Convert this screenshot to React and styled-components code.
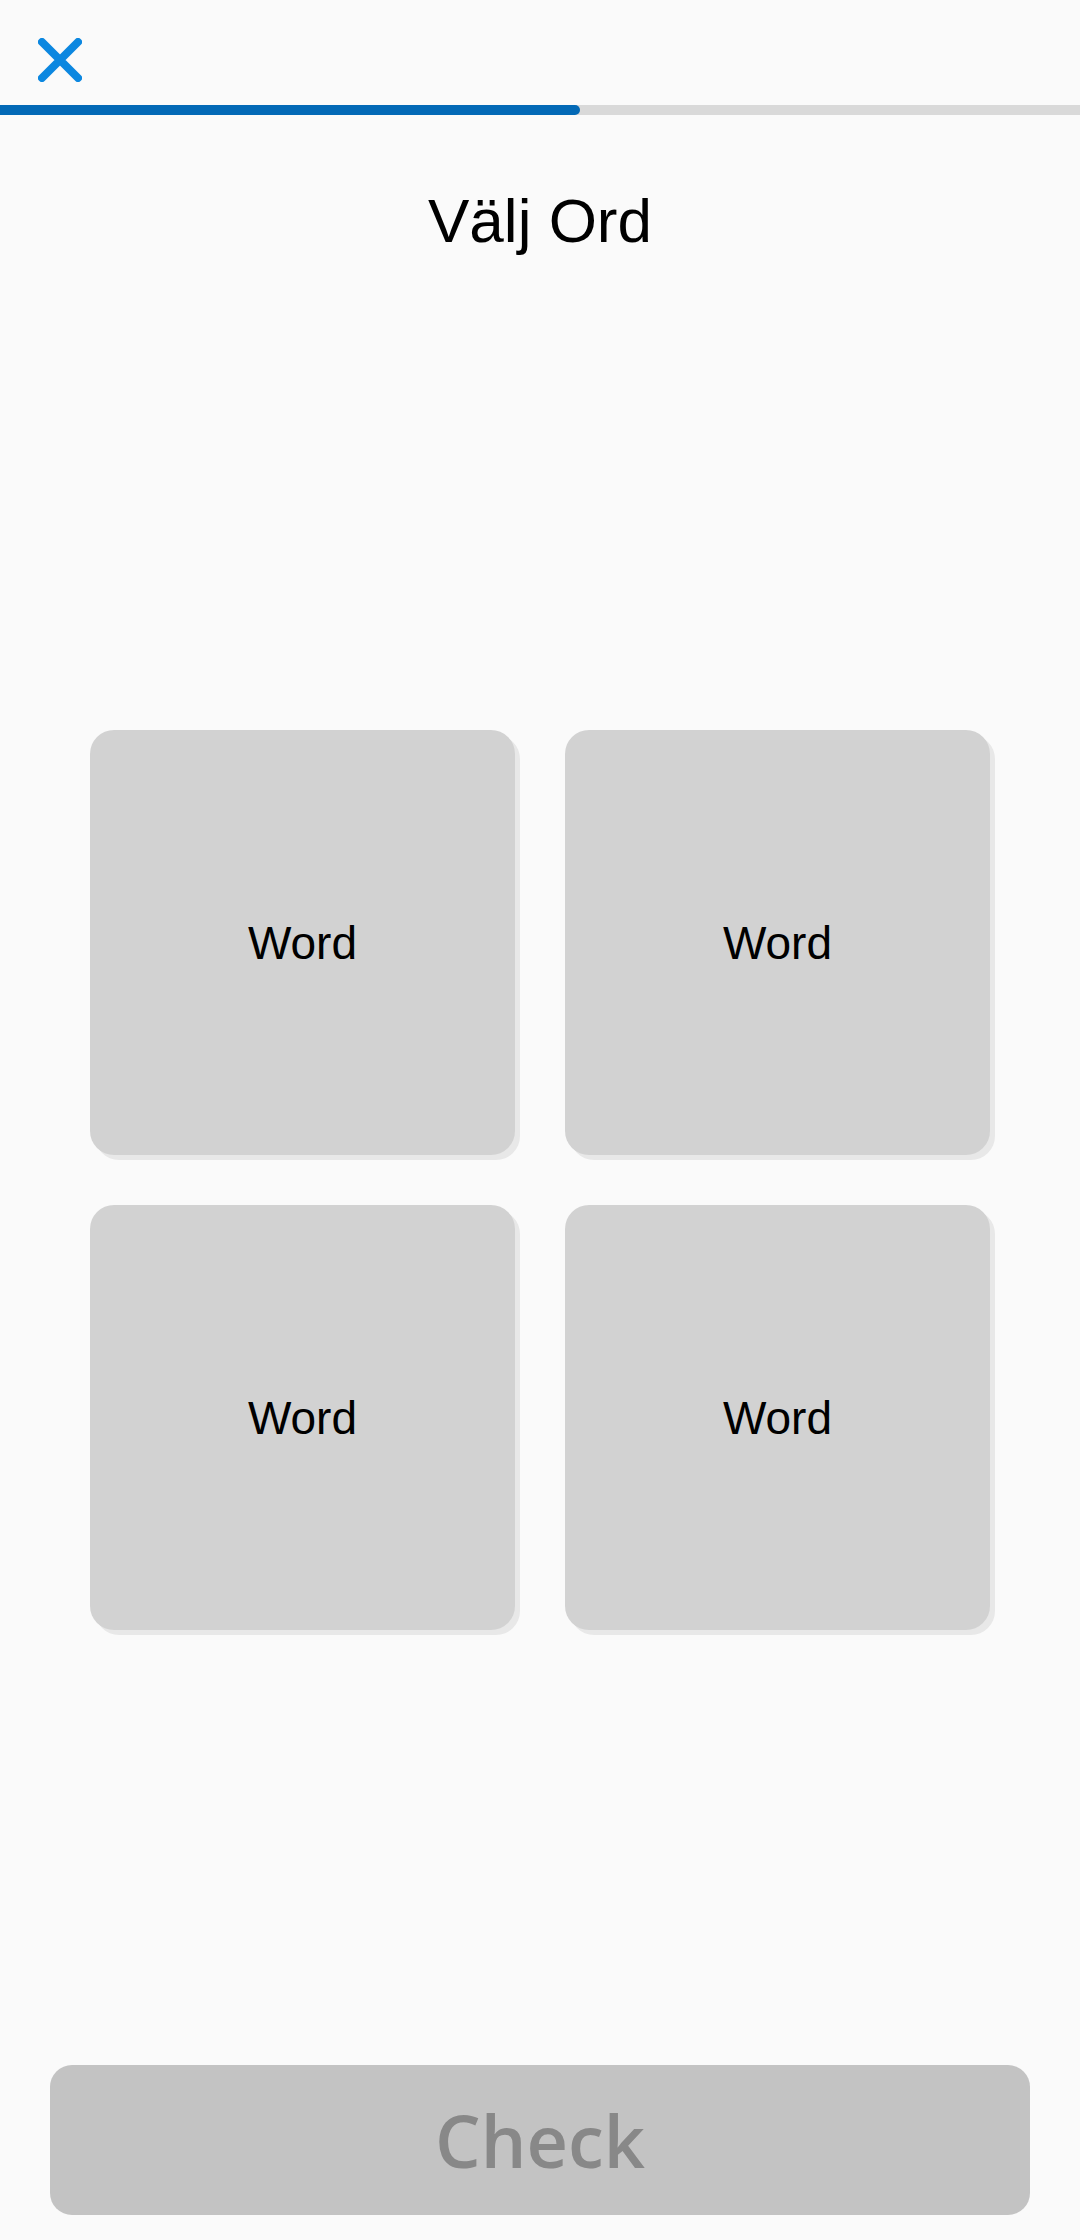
import React from 'react';
import styled, { createGlobalStyle } from 'styled-components';

const GlobalStyle = createGlobalStyle`
  html, body {
    margin: 0;
    padding: 0;
    background: #fafafa;
  }
`;

const Screen = styled.div`
  display: flex;
  flex-direction: column;
  width: 1080px;
  min-height: 2240px;
  background: #fafafa;
  font-family: 'Liberation Sans', Arial, sans-serif;
`;

const Header = styled.div`
  display: flex;
  align-items: flex-start;
  height: 105px;
  padding: 38px 0 0 38px;
  box-sizing: border-box;
`;

const CloseButton = styled.button`
  display: flex;
  padding: 0;
  border: none;
  background: none;
  cursor: pointer;
`;

const Track = styled.div`
  height: 10px;
  background: #d9d9d9;
`;

const Fill = styled.div`
  height: 100%;
  background: #0369b6;
  border-radius: 0 5px 5px 0;
`;

const Title = styled.h1`
  margin: 75px 0 0;
  font-size: 62px;
  line-height: 62px;
  font-weight: 400;
  color: #000;
  text-align: center;
`;

const Grid = styled.div`
  display: grid;
  grid-template-columns: repeat(2, 425px);
  grid-auto-rows: 425px;
  gap: 50px;
  justify-content: center;
  margin-top: 478px;
`;

const WordCard = styled.button`
  display: flex;
  align-items: center;
  justify-content: center;
  padding: 0;
  border: none;
  border-radius: 24px;
  background: #d2d2d2;
  box-shadow: 5px 5px 0 #e8e8e8;
  font-family: 'Liberation Sans', Arial, sans-serif;
  font-size: 46px;
  color: #000;
  cursor: pointer;
`;

const Footer = styled.div`
  margin-top: auto;
  padding: 0 50px 25px;
`;

const CheckButton = styled.button`
  display: flex;
  align-items: center;
  justify-content: center;
  width: 100%;
  height: 150px;
  border: none;
  border-radius: 22px;
  background: #c3c3c3;
  color: #888;
  font-family: 'Open Sans', 'Noto Sans', sans-serif;
  font-size: 72px;
  font-weight: 600;
  cursor: default;
`;

const words = ['Word', 'Word', 'Word', 'Word'];

function CloseIcon() {
  return (
    <svg width="44" height="44" viewBox="0 0 44 44">
      <path
        d="M4 4 L40 40 M40 4 L4 40"
        stroke="#0b87e0"
        strokeWidth="8"
        strokeLinecap="round"
        fill="none"
      />
    </svg>
  );
}

export default function App() {
  const progress = 580 / 1080;
  return (
    <>
      <GlobalStyle />
      <Screen>
        <Header>
          <CloseButton aria-label="Stäng">
            <CloseIcon />
          </CloseButton>
        </Header>
        <Track>
          <Fill style={{ width: `${progress * 100}%` }} />
        </Track>
        <Title>Välj Ord</Title>
        <Grid>
          {words.map((w, i) => (
            <WordCard key={i}>{w}</WordCard>
          ))}
        </Grid>
        <Footer>
          <CheckButton disabled>Check</CheckButton>
        </Footer>
      </Screen>
    </>
  );
}
